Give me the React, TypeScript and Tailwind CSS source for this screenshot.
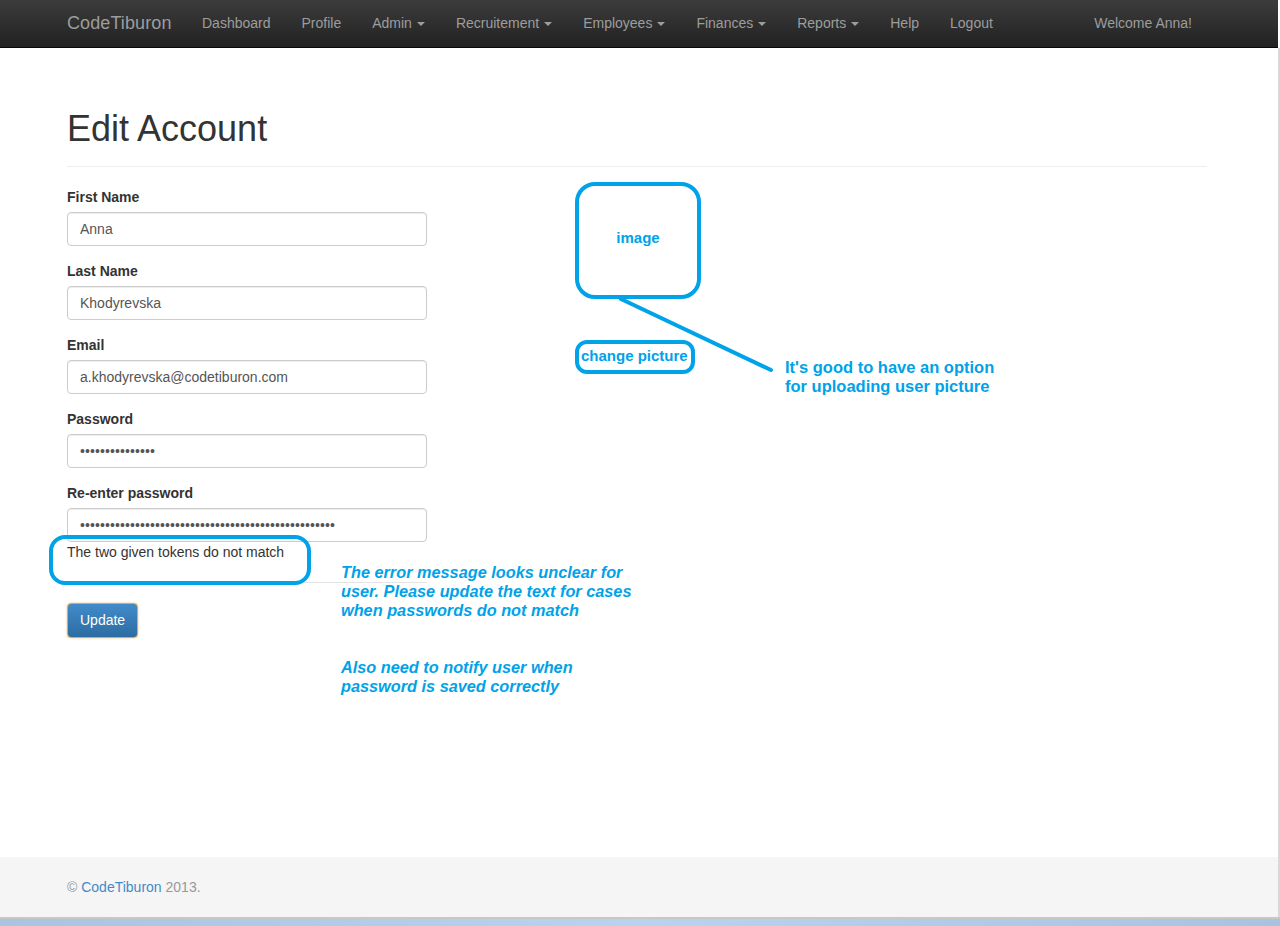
import React from "react";

const navLinks: { label: string; caret?: boolean }[] = [
  { label: "Dashboard" },
  { label: "Profile" },
  { label: "Admin", caret: true },
  { label: "Recruitement", caret: true },
  { label: "Employees", caret: true },
  { label: "Finances", caret: true },
  { label: "Reports", caret: true },
  { label: "Help" },
  { label: "Logout" },
];

const fields = [
  { label: "First Name", value: "Anna" },
  { label: "Last Name", value: "Khodyrevska" },
  { label: "Email", value: "a.khodyrevska@codetiburon.com" },
];

const Caret = () => (
  <span className="inline-block ml-[5px] w-0 h-0 align-middle border-x-4 border-x-transparent border-t-4 border-t-[#9d9d9d]" />
);

const Input = ({ children }: { children: React.ReactNode }) => (
  <div className="w-[360px] h-[34px] px-[12px] flex items-center rounded-[4px] border border-[#cccccc] shadow-[inset_0_1px_1px_rgba(0,0,0,0.075)] text-[14px] text-[#555555]">
    {children}
  </div>
);

const Dots = ({ count }: { count: number }) => (
  <span className="text-[14px] leading-none text-[#555555] tracking-[0.1px]">
    {"\u2022".repeat(count)}
  </span>
);

const App = () => {
  const blue = "#00a2e8";
  return (
    <div
      className="relative flex w-[1280px] h-[926px] flex-col bg-white overflow-hidden"
      style={{ fontFamily: '"Liberation Sans", Arial, sans-serif' }}
    >
      {/* navbar */}
      <div className="h-[48px] w-[1278px] shrink-0 bg-gradient-to-b from-[#3c3c3c] to-[#222222] border-b border-[#080808] flex items-center">
        <div className="ml-[67px] flex items-center w-[1140px]">
          <span className="text-[18px] text-[#9d9d9d] pr-[15px] tracking-[0.1px]">CodeTiburon</span>
          <div className="flex items-center">
            {navLinks.map((l) => (
              <span key={l.label} className="px-[15.5px] text-[14px] text-[#9d9d9d] flex items-center">
                {l.label}
                {l.caret && <Caret />}
              </span>
            ))}
          </div>
          <span className="ml-auto mr-[15px] text-[14px] text-[#9d9d9d]">Welcome Anna!</span>
        </div>
      </div>

      <div className="flex flex-1 w-[1280px]">
        <div className="flex flex-col w-[1278px]">
          {/* main */}
          <div className="flex-1">
            <div className="ml-[67px] w-[1140px] text-[#333333]">
              <div className="pt-[61px] pb-[17px] border-b border-[#eeeeee]">
                <h1 className="text-[36px] leading-[40px] font-normal">Edit Account</h1>
              </div>
              <div className="pt-[20px] w-[360px]">
                {[...fields, { label: "Password", value: "" }].map((f) => (
                  <div key={f.label} className="mb-[15px]">
                    <div className="text-[14px] leading-[20px] font-bold mb-[5px]">{f.label}</div>
                    <Input>{f.label === "Password" ? <Dots count={15} /> : f.value}</Input>
                  </div>
                ))}
                <div className="border-b border-[#e5e5e5] pb-[20px]">
                  <div className="text-[14px] leading-[20px] font-bold mb-[5px]">Re-enter password</div>
                  <Input>
                    <Dots count={51} />
                  </Input>
                  <div className="text-[14px] leading-[20px] text-[#333333]">The two given tokens do not match</div>
                </div>
                <div className="pt-[20px]">
                  <button className="h-[35px] px-[12px] rounded-[4px] border border-[#e8a83c] bg-gradient-to-b from-[#428bca] to-[#2d6ca2] text-white text-[14px] shadow-[0_0_2px_rgba(240,173,78,0.8)]">
                    Update
                  </button>
                </div>
              </div>
            </div>
          </div>

          {/* footer */}
          <div className="h-[60px] shrink-0 bg-[#f5f5f5] flex items-center">
            <p className="ml-[67px] text-[14px] text-[#999999]">
              © <span className="text-[#428bca]">CodeTiburon</span> 2013.
            </p>
          </div>
        </div>
        <div className="w-[2px] bg-[#d8d8d8]" />
      </div>

      {/* taskbar strip */}
      <div className="h-[2px] shrink-0 bg-[#c8c8c8]" />
      <div className="h-[7px] shrink-0 bg-gradient-to-r from-[#a9c4df] via-[#b9d3ee] to-[#a8c3e0]" />

      {/* review annotations */}
      <svg className="absolute left-0 top-0 pointer-events-none" width="1280" height="926">
        <g fill="none" stroke={blue} strokeWidth="4" strokeLinecap="round" strokeLinejoin="round">
          <rect x="577" y="184" width="122" height="113" rx="18" />
          <rect x="577" y="342" width="116" height="30" rx="10" />
          <rect x="51" y="537" width="258" height="46" rx="14" />
          <line x1="621" y1="299" x2="771" y2="370" />
        </g>
      </svg>
      <div className="absolute left-[577px] top-[229px] w-[122px] text-center text-[15px] font-bold leading-[18px] text-[#00a2e8]">
        image
      </div>
      <div className="absolute left-[581px] top-[347px] text-[15px] font-bold leading-[18px] text-[#00a2e8]">
        change picture
      </div>
      <div className="absolute left-[785px] top-[358px] text-[16.5px] font-bold leading-[19px] text-[#00a2e8]">
        It's good to have an option
        <br />
        for uploading user picture
      </div>
      <div className="absolute left-[341px] top-[563px] text-[16.3px] font-bold italic leading-[19px] text-[#00a2e8]">
        The error message looks unclear for
        <br />
        user. Please update the text for cases
        <br />
        when passwords do not match
      </div>
      <div className="absolute left-[341px] top-[658px] text-[16.3px] font-bold italic leading-[19px] text-[#00a2e8]">
        Also need to notify user when
        <br />
        password is saved correctly
      </div>
    </div>
  );
};

export default App;
